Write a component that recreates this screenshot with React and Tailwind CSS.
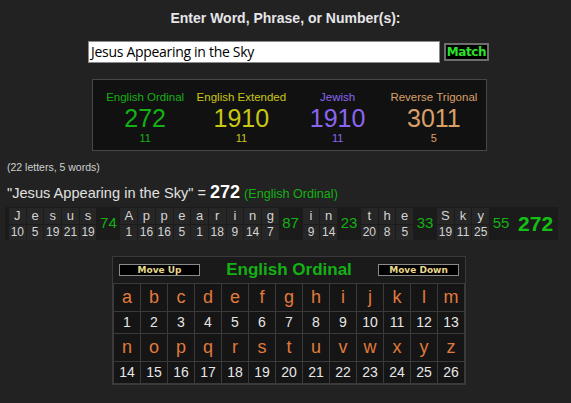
import React from 'react';

const font = { fontFamily: '"Liberation Sans", Arial, sans-serif' };

const results = [
    { name: 'English Ordinal', value: 272, count: 11, color: 'text-[#14b014]' },
    { name: 'English Extended', value: 1910, count: 11, color: 'text-[#c8c814]' },
    { name: 'Jewish', value: 1910, count: 11, color: 'text-[#8a66f0]' },
    { name: 'Reverse Trigonal', value: 3011, count: 5, color: 'text-[#d8a068]' },
];

const words = [
    { letters: [['J', 10], ['e', 5], ['s', 19], ['u', 21], ['s', 19]], total: 74 },
    { letters: [['A', 1], ['p', 16], ['p', 16], ['e', 5], ['a', 1], ['r', 18], ['i', 9], ['n', 14], ['g', 7]], total: 87 },
    { letters: [['i', 9], ['n', 14]], total: 23 },
    { letters: [['t', 20], ['h', 8], ['e', 5]], total: 33 },
    { letters: [['S', 19], ['k', 11], ['y', 25]], total: 55 },
];

const alphabet = 'abcdefghijklmnopqrstuvwxyz'.split('');

const LetterCell = ({ ch, val }) => (
    <div className="flex flex-col w-[16.7px] gap-px">
        <div className="h-[16px] bg-[#262626] text-[13px] leading-[16px] text-center text-[#d4d4d4]">{ch}</div>
        <div className="h-[15px] bg-[#262626] text-[12px] leading-[15px] text-center text-[#d4d4d4]">{val}</div>
    </div>
);

const CipherRow = ({ items, isLetter }) => (
    <tr className={isLetter ? 'h-[27px]' : 'h-[21px]'}>
        {items.map((it, i) => (
            <td
                key={i}
                className={
                    'border border-[#3a3a3a] bg-[#151515] text-center p-0 ' +
                    (isLetter ? 'text-[18px] text-[#e07a3c]' : 'text-[14px] text-[#e6e6e6]')
                }
            >
                {it}
            </td>
        ))}
    </tr>
);

const App = () => {
    return (
        <div className="w-[571px] h-[403px] bg-[#222222] overflow-hidden" style={font}>
            <div className="pt-[10px] text-center text-[14px] leading-[17px] font-bold text-[#e6e6ea]">
                Enter Word, Phrase, or Number(s):
            </div>

            <div className="mt-[14px] flex items-center ml-[88px] gap-[4px]">
                <div
                    className="w-[352px] h-[22px] bg-white border border-[#8a8a8a] px-[2px] text-[14px] leading-[20px] text-black"
                    style={{ fontFamily: '"Open Sans", "DejaVu Sans", sans-serif', letterSpacing: '-0.3px' }}
                >
                    Jesus Appearing in the Sky
                </div>
                <button
                    className="w-[45px] h-[18px] bg-black border-2 border-[#6e6e6e] text-[12px] leading-[12px] font-bold text-[#2ee02e]"
                    style={{ fontFamily: '"DejaVu Sans", Verdana, sans-serif', letterSpacing: '-0.4px' }}
                >
                    Match
                </button>
            </div>

            <div className="mt-[16px] ml-[92px] w-[395px] h-[72px] bg-[#111111] border border-[#474747] flex px-[4px] pt-[10px]">
                {results.map((r) => (
                    <div key={r.name} className={'flex-1 flex flex-col items-center ' + r.color}>
                        <div className="text-[11.5px] leading-[14px]">{r.name}</div>
                        <div className="text-[25px] leading-[26px] mt-px">{r.value}</div>
                        <div className="text-[11px] leading-[13px] mt-px">{r.count}</div>
                    </div>
                ))}
            </div>

            <div className="mt-[10px] ml-[7px] text-[10.5px] leading-[13px] text-[#d0d0d0]">(22 letters, 5 words)</div>

            <div className="mt-[9px] ml-[7px] flex items-baseline gap-[4px] leading-[18px]">
                <span className="text-[14.6px] text-[#e0e0e0]">"Jesus Appearing in the Sky" =</span>
                <span className="text-[18px] font-bold text-white">272</span>
                <span className="text-[12.6px] text-[#14b014]">(English Ordinal)</span>
            </div>

            <div className="mt-[4px] ml-[5px] w-[553px] h-[33px] bg-[#1b1b1b] flex items-stretch pl-[4px] py-px">
                {words.map((w, wi) => (
                    <React.Fragment key={wi}>
                        <div className="flex gap-px">
                            {w.letters.map(([ch, val], li) => (
                                <LetterCell key={li} ch={ch} val={val} />
                            ))}
                        </div>
                        <div className="w-[24px] flex items-center justify-center text-[15px] text-[#14b014]">{w.total}</div>
                    </React.Fragment>
                ))}
                <div className="flex-1 flex items-center justify-center text-[21px] font-bold text-[#14c014]">272</div>
            </div>

            <div className="mt-[16px] ml-[112px] w-[354px] bg-[#1a1a1a] border border-[#3a3a3a]">
                <div className="h-[26px] flex items-center justify-between px-[6px]">
                    <button className="w-[81px] h-[12px] bg-black border border-[#8a8a8a] text-[9px] leading-[10px] font-bold text-[#e8d88a]" style={{ fontFamily: '"DejaVu Sans", Verdana, sans-serif' }}>
                        Move Up
                    </button>
                    <div className="text-[17px] font-bold text-[#14b014] leading-[20px]">English Ordinal</div>
                    <button className="w-[81px] h-[12px] bg-black border border-[#8a8a8a] text-[9px] leading-[10px] font-bold text-[#e8d88a]" style={{ fontFamily: '"DejaVu Sans", Verdana, sans-serif' }}>
                        Move Down
                    </button>
                </div>
                <table className="w-full border-collapse table-fixed">
                    <tbody>
                        <CipherRow items={alphabet.slice(0, 13)} isLetter />
                        <CipherRow items={alphabet.slice(0, 13).map((_, i) => i + 1)} />
                        <CipherRow items={alphabet.slice(13)} isLetter />
                        <CipherRow items={alphabet.slice(13).map((_, i) => i + 14)} />
                    </tbody>
                </table>
            </div>
        </div>
    );
};

export default App;
